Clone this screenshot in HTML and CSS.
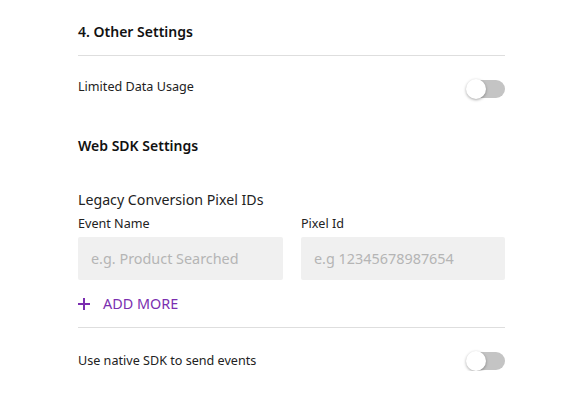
FILE: index.html
```html
<!DOCTYPE html>
<html>
<head>
<meta charset="utf-8">
<link rel="stylesheet" href="styles.css">
</head>
<body>
<div class="panel">
  <h2 class="section-title">4. Other Settings</h2>
  <div class="divider"></div>
  <div class="row toggle-row first">
    <span class="row-label">Limited Data Usage</span>
    <span class="toggle"><span class="knob"></span></span>
  </div>
  <h3 class="sub-title">Web SDK Settings</h3>
  <div class="group-label">Legacy Conversion Pixel IDs</div>
  <div class="fields">
    <div class="field">
      <label class="field-label">Event Name</label>
      <div class="input">e.g. Product Searched</div>
    </div>
    <div class="field">
      <label class="field-label">Pixel Id</label>
      <div class="input">e.g 12345678987654</div>
    </div>
  </div>
  <div class="add-more"><span class="plus"></span><span>ADD MORE</span></div>
  <div class="divider"></div>
  <div class="row toggle-row last">
    <span class="row-label">Use native SDK to send events</span>
    <span class="toggle"><span class="knob"></span></span>
  </div>
</div>
</body>
</html>
```

FILE: styles.css
```css
html, body {
  margin: 0;
  padding: 0;
  background: #ffffff;
}
body {
  font-family: "Noto Sans", "Open Sans", sans-serif;
  color: #1a1a1a;
}
.panel {
  width: 427px;
  margin: 0 0 0 78px;
  padding-top: 21px;
}
.section-title {
  margin: 0;
  font-size: 14px;
  font-weight: 600;
  line-height: 22px;
  color: #111;
}
.divider {
  height: 1px;
  background: #dedede;
  margin-top: 12px;
}
.row {
  display: flex;
  align-items: center;
  justify-content: space-between;
}
.toggle-row {
  height: 20px;
}
.toggle-row.first {
  margin-top: 23px;
}
.toggle-row.first .row-label {
  padding-bottom: 4px;
}
.toggle-row.last {
  margin-top: 23px;
}
.row-label {
  font-size: 12.6px;
  line-height: 18px;
  color: #222;
}
.toggle {
  position: relative;
  width: 38px;
  height: 18px;
  border-radius: 9px;
  background: #c4c4c4;
}
.knob {
  position: absolute;
  left: -1px;
  top: -1px;
  width: 20px;
  height: 20px;
  border-radius: 50%;
  background: #fff;
  box-shadow: 0 1px 3px rgba(0,0,0,0.35);
}
.sub-title {
  margin: 36px 0 0 0;
  font-size: 14px;
  font-weight: 600;
  line-height: 22px;
  color: #111;
}
.group-label {
  margin-top: 32px;
  font-size: 14.2px;
  line-height: 22px;
  color: #222;
}
.fields {
  display: grid;
  grid-template-columns: 205px 204px;
  column-gap: 18px;
  margin-top: 4px;
}
.field {
  display: flex;
  flex-direction: column;
}
.field-label {
  font-size: 12.6px;
  line-height: 18px;
  color: #222;
}
.input {
  margin-top: 4px;
  height: 43px;
  border-radius: 2px;
  background: #f0f0f0;
  color: #b5b5b5;
  font-size: 14.4px;
  line-height: 43px;
  padding-left: 13px;
}
.add-more {
  display: flex;
  align-items: center;
  margin-top: 14px;
  height: 20px;
  color: #7b2eb0;
  font-size: 14.4px;
  line-height: 20px;
}
.plus {
  position: relative;
  width: 12px;
  height: 12px;
  margin-right: 13px;
}
.plus::before, .plus::after {
  content: "";
  position: absolute;
  background: #7b2eb0;
}
.plus::before {
  left: 0;
  top: 5px;
  width: 12px;
  height: 2px;
}
.plus::after {
  left: 5px;
  top: 0;
  width: 2px;
  height: 12px;
}
.add-more + .divider {
  margin-top: 13px;
}
```
